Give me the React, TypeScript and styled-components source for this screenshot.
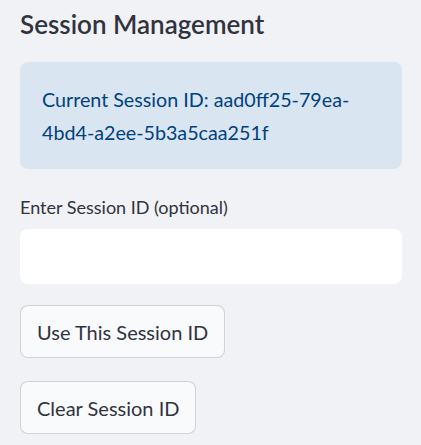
import styled, { createGlobalStyle } from 'styled-components';

const GlobalStyle = createGlobalStyle`
  html, body {
    margin: 0;
    padding: 0;
    background: #f0f2f6;
    font-family: 'Lato', 'Noto Sans', sans-serif;
    color: #31333f;
  }
`;

const Sidebar = styled.aside`
  width: 421px;
  height: 445px;
  box-sizing: border-box;
  padding: 9px 19px 0 20px;
  display: flex;
  flex-direction: column;
  overflow: hidden;
`;

const Title = styled.h2`
  margin: 0;
  font-size: 26px;
  font-weight: 600;
  line-height: 30px;
  color: #31333f;
`;

const InfoBox = styled.div`
  margin-top: 23px;
  padding: 21px 22px 20px;
  border-radius: 8px;
  background: #dae5f2;
  color: #004280;
  font-size: 19.7px;
  line-height: 33px;
`;

const Field = styled.label`
  margin-top: 27px;
  display: flex;
  flex-direction: column;
  gap: 10px;
  font-size: 18px;
  line-height: 23px;
`;

const Input = styled.input`
  height: 55px;
  box-sizing: border-box;
  border: none;
  border-radius: 8px;
  background: #ffffff;
  padding: 0 14px;
  font: inherit;
  font-size: 20px;
  outline: none;
`;

const Actions = styled.div`
  margin-top: 21px;
  display: flex;
  flex-direction: column;
  align-items: flex-start;
  gap: 23px;
`;

const Button = styled.button`
  height: 53px;
  box-sizing: border-box;
  padding: 0 16px;
  border: 1px solid rgba(49, 51, 63, 0.2);
  border-radius: 8px;
  background: #f9fafb;
  color: #31333f;
  font-family: inherit;
  font-size: 20px;
  cursor: pointer;
`;

export default function App() {
  return (
    <>
      <GlobalStyle />
      <Sidebar>
        <Title>Session Management</Title>
        <InfoBox>Current Session ID: aad0ff25-79ea-4bd4-a2ee-5b3a5caa251f</InfoBox>
        <Field>
          Enter Session ID (optional)
          <Input type="text" />
        </Field>
        <Actions>
          <Button>Use This Session ID</Button>
          <Button>Clear Session ID</Button>
        </Actions>
      </Sidebar>
    </>
  );
}
